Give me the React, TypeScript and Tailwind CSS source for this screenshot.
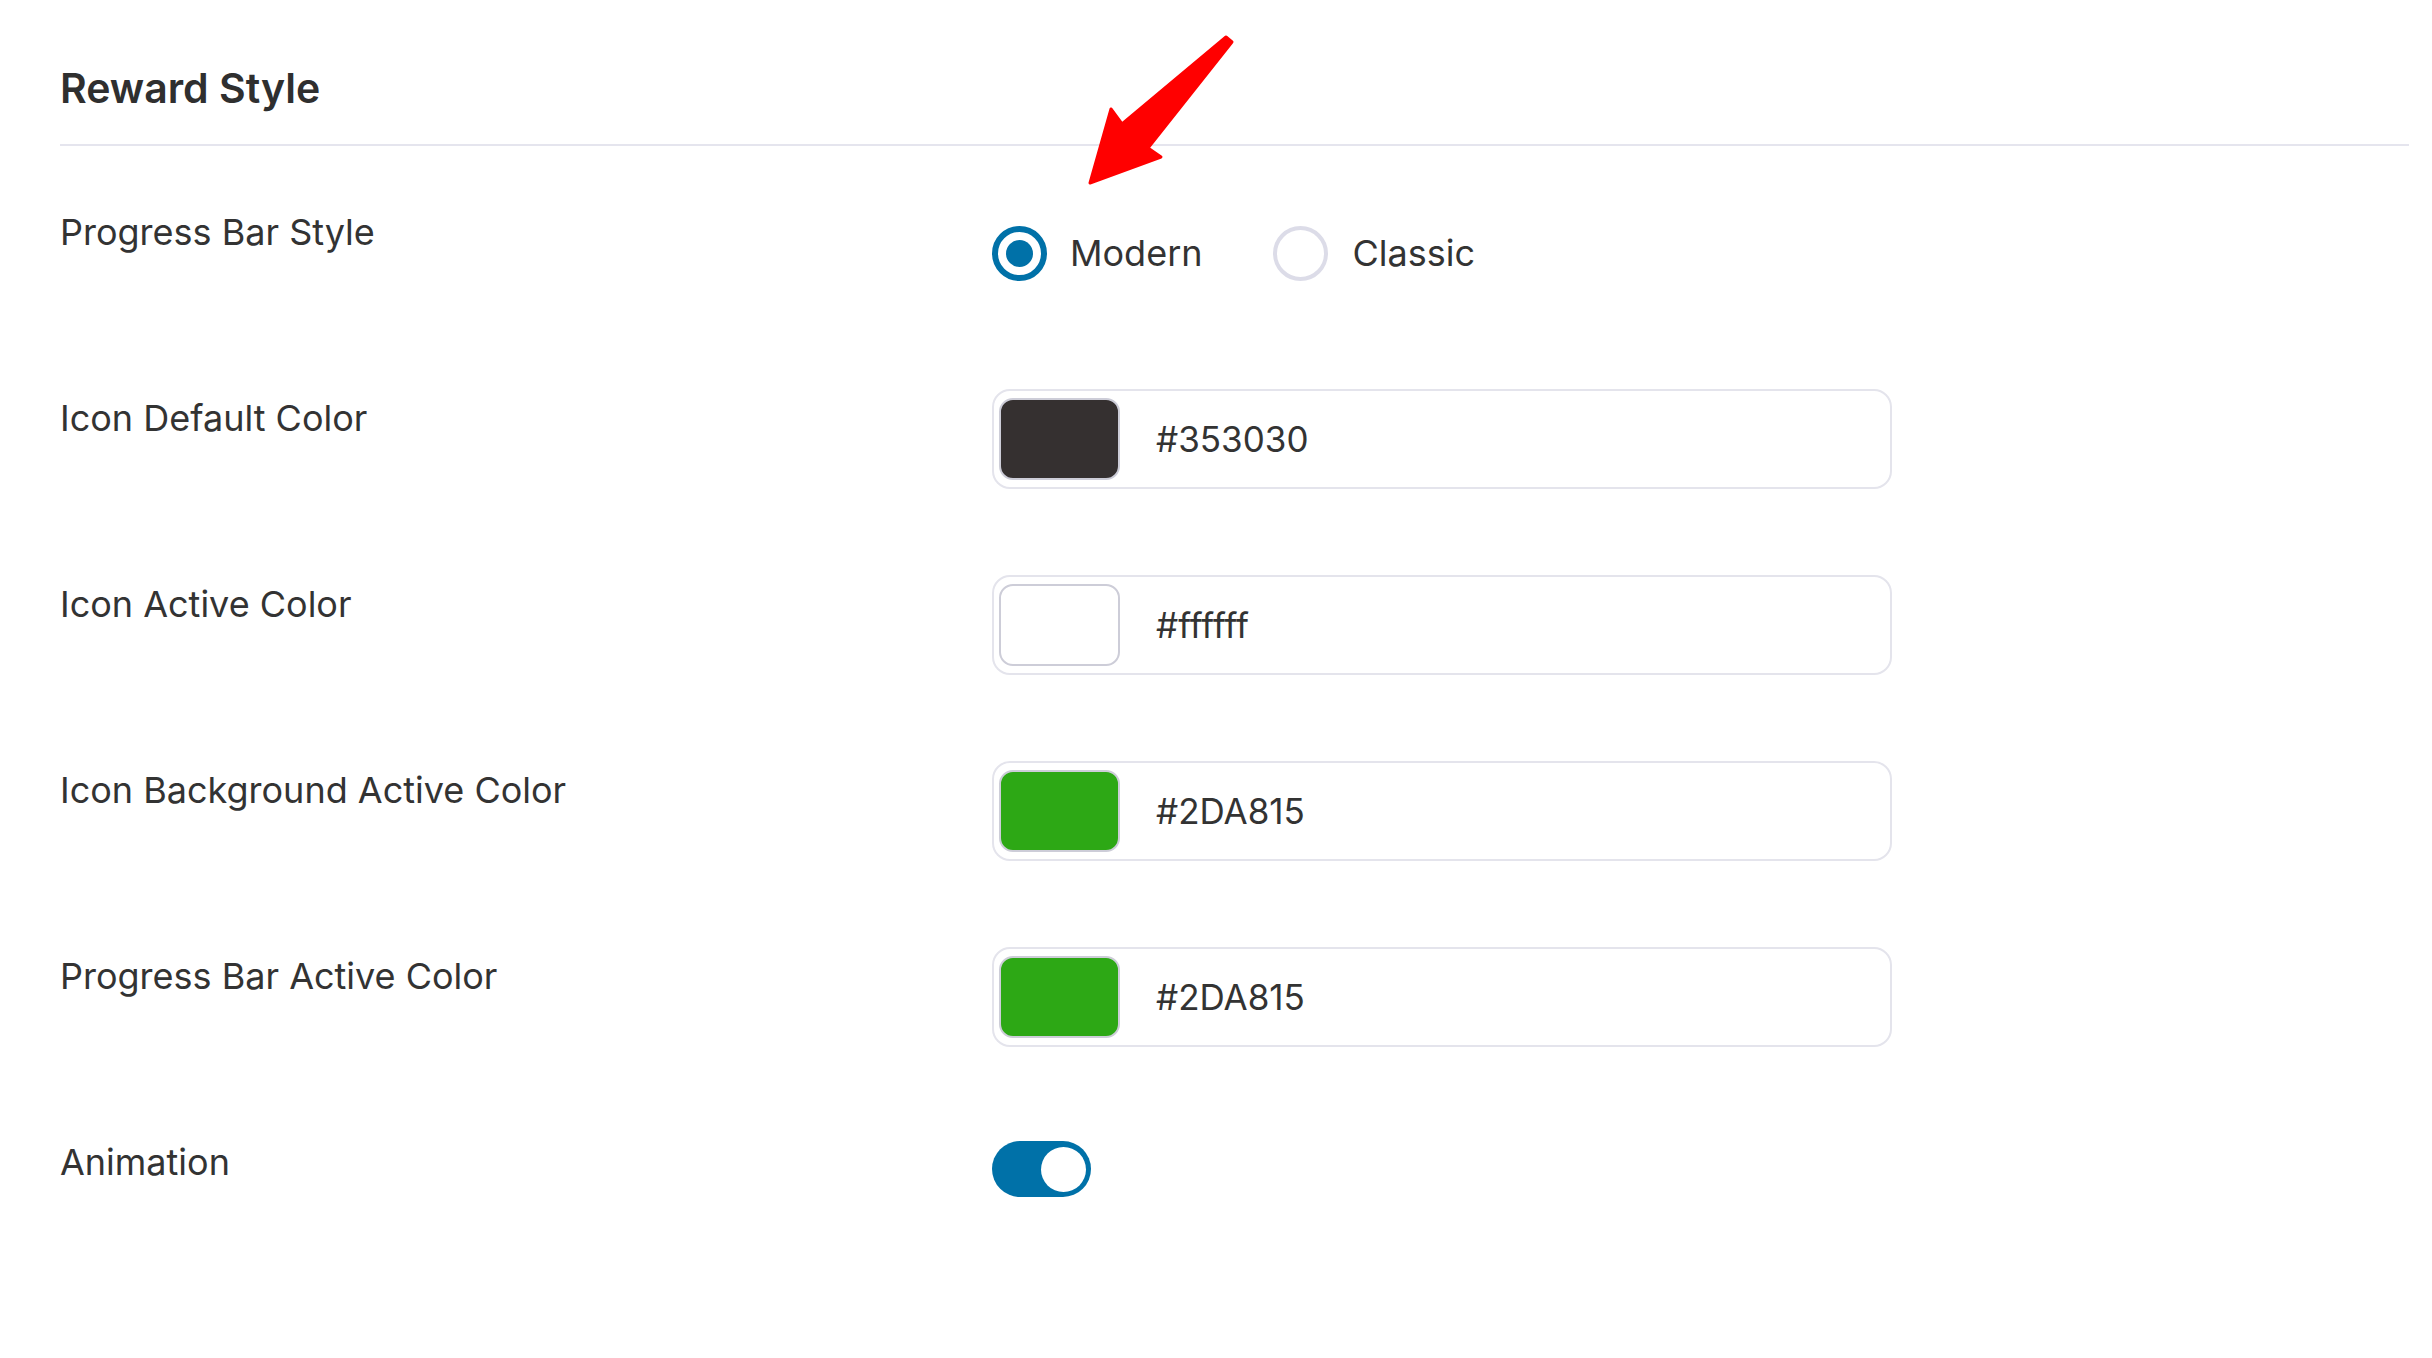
const rows = [
  { label: "Icon Default Color", color: "#353030", value: "#353030" },
  { label: "Icon Active Color", color: "#ffffff", value: "#ffffff" },
  { label: "Icon Background Active Color", color: "#2DA815", value: "#2DA815" },
  { label: "Progress Bar Active Color", color: "#2DA815", value: "#2DA815" },
];

function ColorField({ color, value }: { color: string; value: string }) {
  return (
    <div className="flex h-[100px] w-[900px] items-center rounded-[18px] border-2 border-[#e4e4ec] bg-white pl-[5px]">
      <div
        className="h-[82px] w-[121px] rounded-[14px] border-2 border-[#cdcdd8]"
        style={{ backgroundColor: color }}
      />
      <span className="ml-[36px] text-[35px] leading-[44px] text-[#333]">{value}</span>
    </div>
  );
}

export default function App() {
  return (
    <div className="relative min-h-screen bg-white pl-[60px] pr-[23px] font-['Inter',sans-serif] text-[#333]">
      {/* Header */}
      <div className="border-b-2 border-[#e5e5ee] pt-[64px] pb-[32px]">
        <h2 className="text-[41px] leading-[48px] font-semibold text-[#2f2f2f]">Reward Style</h2>
      </div>

      {/* Progress bar style */}
      <div className="flex h-[186px]">
        <div className="w-[932px] pt-[64px] text-[36px] leading-[44px]">Progress Bar Style</div>
        <div className="pt-[57px]">
          <div className="flex h-[100px] items-center">
            <span className="flex h-[55px] w-[55px] items-center justify-center rounded-full border-[6px] border-[#0071a8]">
              <span className="h-[27px] w-[27px] rounded-full bg-[#0071a8]" />
            </span>
            <span className="ml-[23px] text-[36px] leading-[44px]">Modern</span>
            <span className="ml-[70px] h-[55px] w-[55px] rounded-full border-[4px] border-[#dcdce8]" />
            <span className="ml-[25px] text-[36px] leading-[44px]">Classic</span>
          </div>
        </div>
      </div>

      {/* Color rows */}
      {rows.map((r) => (
        <div key={r.label} className="flex h-[186px]">
          <div className="w-[932px] pt-[64px] text-[36px] leading-[44px]">{r.label}</div>
          <div className="pt-[57px]">
            <ColorField color={r.color} value={r.value} />
          </div>
        </div>
      ))}

      {/* Animation */}
      <div className="flex h-[186px]">
        <div className="w-[932px] pt-[64px] text-[36px] leading-[44px]">Animation</div>
        <div className="pt-[65px]">
          <div className="flex h-[56px] w-[99px] items-center justify-end rounded-full bg-[#0071a8] pr-[5px]">
            <span className="h-[45px] w-[45px] rounded-full bg-white" />
          </div>
        </div>
      </div>

      {/* Annotation arrow */}
      <svg className="absolute left-[1085px] top-[32px]" width="150" height="160" viewBox="0 0 150 160">
        <polygon
          points="141,5 147,10 63,116 76,125 5,151 26,77 37,92"
          fill="#ff0000"
          stroke="#ff0000"
          strokeWidth="3"
          strokeLinejoin="round"
        />
      </svg>
    </div>
  );
}
